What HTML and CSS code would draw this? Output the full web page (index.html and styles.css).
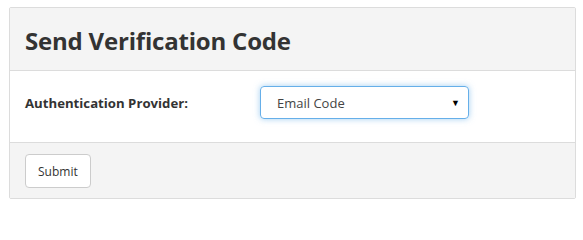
FILE: index.html
```html
<!DOCTYPE html>
<html>
<head>
<meta charset="utf-8">
<link rel="stylesheet" href="styles.css">
</head>
<body>
<div class="panel">
  <div class="panel-heading">
    <h3 class="panel-title">Send Verification Code</h3>
  </div>
  <div class="panel-body">
    <div class="form-row">
      <label class="form-label">Authentication Provider:</label>
      <div class="select">
        <span class="select-value">Email Code</span>
        <span class="select-arrow">&#9660;</span>
      </div>
    </div>
  </div>
  <div class="panel-footer">
    <button class="btn">Submit</button>
  </div>
</div>
</body>
</html>
```
FILE: styles.css
```css
html, body {
  margin: 0;
  padding: 0;
  background: #fff;
}
body {
  font-family: "Open Sans", "Segoe UI", sans-serif;
  color: #333;
  padding: 7px 7px 0 9px;
}
.panel {
  border: 1px solid #dcdcdc;
  border-radius: 2px;
  background: #fff;
}
.panel-heading {
  background: #f4f4f4;
  border-bottom: 1px solid #dcdcdc;
  height: 62px;
  padding: 0 15px;
  display: flex;
  align-items: center;
}
.panel-title {
  margin: 2px 0 0;
  font-size: 24px;
  font-weight: 700;
  color: #333;
  letter-spacing: -0.2px;
}
.panel-body {
  height: 71px;
  padding: 0 15px;
  display: flex;
  align-items: flex-start;
}
.form-row {
  display: flex;
  align-items: center;
  margin-top: 15px;
}
.form-label {
  width: 235px;
  font-size: 13.2px;
  font-weight: 700;
  color: #333;
}
.select {
  height: 31px;
  border: 1px solid #66afe9;
  border-radius: 4px;
  box-shadow: 0 0 6px rgba(102, 175, 233, 0.6);
  display: flex;
  align-items: center;
  justify-content: space-between;
  padding: 0 8px 0 16px;
  box-sizing: content-box;
  width: 183px;
  font-size: 13px;
  color: #444;
}
.select-arrow {
  font-size: 9px;
  color: #000;
}
.panel-footer {
  background: #f4f4f4;
  border-top: 1px solid #dcdcdc;
  padding: 11px 15px 10px;
}
.btn {
  display: block;
  font-family: "Open Sans", "Segoe UI", sans-serif;
  font-size: 12px;
  color: #333;
  background: #fff;
  border: 1px solid #ccc;
  border-radius: 4px;
  height: 34px;
  padding: 0 12px;
}
```
